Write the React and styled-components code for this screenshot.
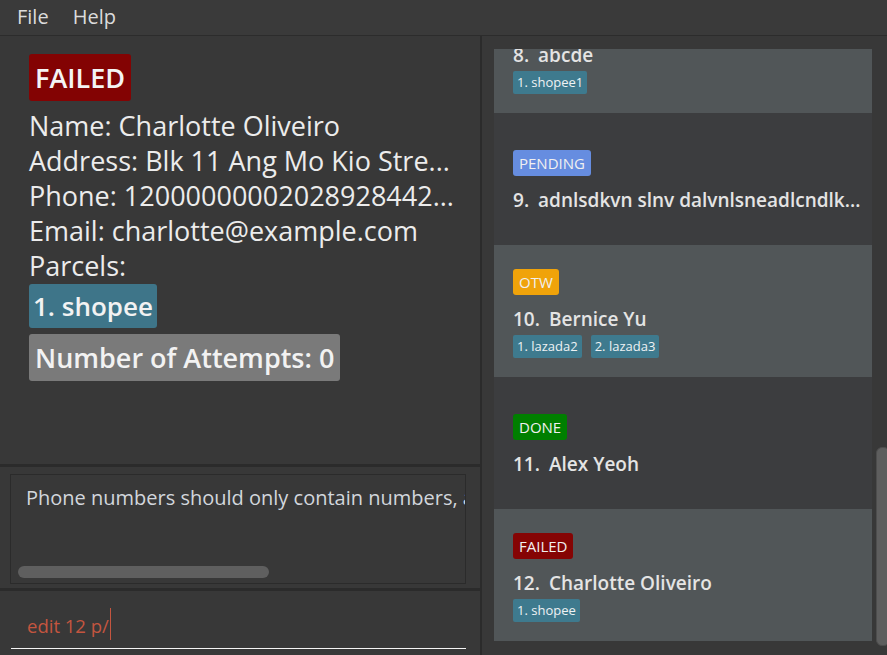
import React from "react";
import styled, { createGlobalStyle } from "styled-components";

const GlobalStyle = createGlobalStyle`
  html, body {
    margin: 0;
    padding: 0;
    background: #383838;
  }
  * {
    box-sizing: border-box;
  }
`;

const statusColors = {
  FAILED: "#850404",
  PENDING: "#668de0",
  OTW: "#f0a30a",
  DONE: "#007f00",
};

const deliveries = [
  { id: 8, name: "abcde", parcels: ["shopee1"] },
  { id: 9, name: "adnlsdkvn slnv dalvnlsneadlcndlk...", status: "PENDING", parcels: [] },
  { id: 10, name: "Bernice Yu", status: "OTW", parcels: ["lazada2", "lazada3"] },
  { id: 11, name: "Alex Yeoh", status: "DONE", parcels: [] },
  { id: 12, name: "Charlotte Oliveiro", status: "FAILED", parcels: ["shopee"] },
];

const App = () => {
  return (
    <>
      <GlobalStyle />
      <Window>
        <MenuBar>
          <MenuItem>File</MenuItem>
          <MenuItem>Help</MenuItem>
        </MenuBar>
        <Main>
          <LeftPane>
            <DetailPanel>
              <DetailBadge>FAILED</DetailBadge>
              <DetailLines>
                <DetailLine>Name: Charlotte Oliveiro</DetailLine>
                <DetailLine>Address: Blk 11 Ang Mo Kio Stre...</DetailLine>
                <DetailLine>Phone: 12000000002028928442...</DetailLine>
                <DetailLine>Email: charlotte@example.com</DetailLine>
                <DetailLine>Parcels:</DetailLine>
              </DetailLines>
              <DetailChip $bg="#3e7589">1. shopee</DetailChip>
              <DetailChip $bg="#7a7a7a" $tall>
                Number of Attempts: 0
              </DetailChip>
            </DetailPanel>
            <ResultPanel>
              <ResultBox>
                <ResultText>
                  Phone numbers should only contain numbers, and it should be at least 3 digits long
                </ResultText>
                <HScrollThumb />
              </ResultBox>
            </ResultPanel>
            <CommandPanel>
              <CommandField>
                <CommandText>edit 12 p/</CommandText>
                <Caret />
              </CommandField>
            </CommandPanel>
          </LeftPane>
          <RightPane>
            <ListViewport>
              <List>
                {deliveries.map((d) => (
                  <Card key={d.id} $dark={d.id % 2 === 1}>
                    <StatusBadge $color={statusColors[d.status || "FAILED"]}>
                      {d.status || "FAILED"}
                    </StatusBadge>
                    <NameRow>
                      <span>{d.id}.</span>
                      <span>{d.name}</span>
                    </NameRow>
                    {d.parcels.length > 0 && (
                      <TagRow>
                        {d.parcels.map((p, i) => (
                          <Tag key={p}>
                            {i + 1}. {p}
                          </Tag>
                        ))}
                      </TagRow>
                    )}
                  </Card>
                ))}
              </List>
            </ListViewport>
            <ScrollTrack>
              <ScrollThumb />
            </ScrollTrack>
          </RightPane>
        </Main>
      </Window>
    </>
  );
};

const Window = styled.div`
  width: 887px;
  height: 655px;
  display: flex;
  flex-direction: column;
  background: #383838;
  overflow: hidden;
  font-family: "Open Sans", "Noto Sans", sans-serif;
`;

const MenuBar = styled.div`
  height: 36px;
  flex-shrink: 0;
  display: flex;
  align-items: center;
  padding: 0 0 3px 17px;
  border-bottom: 1px solid #2c2c2c;
  background: #3a3a3a;
`;

const MenuItem = styled.span`
  font-size: 20px;
  color: #dcdcdc;
  margin-right: 24px;
`;

const Main = styled.div`
  flex: 1;
  display: flex;
  min-height: 0;
`;

const LeftPane = styled.div`
  width: 482px;
  flex-shrink: 0;
  display: flex;
  flex-direction: column;
  border-right: 2px solid #2b2b2b;
`;

const DetailPanel = styled.div`
  height: 428px;
  padding: 18px 20px 0 29px;
  display: flex;
  flex-direction: column;
  align-items: flex-start;
`;

const DetailBadge = styled.div`
  height: 47px;
  line-height: 47px;
  padding: 0 6px;
  background: #830303;
  color: #f4f4f4;
  font-size: 27px;
  font-weight: 600;
  border-radius: 3px;
`;

const DetailLines = styled.div`
  margin-top: 7px;
  display: flex;
  flex-direction: column;
`;

const DetailLine = styled.div`
  font-size: 27px;
  line-height: 35px;
  height: 35px;
  color: #ececec;
  white-space: nowrap;
`;

const DetailChip = styled.div`
  margin-top: ${(p) => (p.$tall ? "6px" : "1px")};
  height: ${(p) => (p.$tall ? "47px" : "44px")};
  line-height: ${(p) => (p.$tall ? "47px" : "44px")};
  padding: 0 ${(p) => (p.$tall ? "6px" : "4px")};
  background: ${(p) => p.$bg};
  color: #f2f2f2;
  font-size: ${(p) => (p.$tall ? "27px" : "26px")};
  font-weight: 600;
  border-radius: 3px;
  white-space: nowrap;
`;

const ResultPanel = styled.div`
  height: 124px;
  flex-shrink: 0;
  border-top: 3px solid #2b2b2b;
  padding: 7px 14px 0 10px;
`;

const ResultBox = styled.div`
  height: 110px;
  border: 1px solid #2b2b2b;
  display: flex;
  flex-direction: column;
  overflow: hidden;
`;

const ResultText = styled.div`
  padding: 10px 0 0 15px;
  font-size: 20px;
  line-height: 26px;
  color: #d2d6dc;
  white-space: nowrap;
`;

const HScrollThumb = styled.div`
  margin: auto 0 5px 7px;
  width: 251px;
  height: 12px;
  flex-shrink: 0;
  background: #5f5f5f;
  border-radius: 6px;
`;

const CommandPanel = styled.div`
  flex: 1;
  border-top: 3px solid #2b2b2b;
  padding: 12px 14px 0 11px;
`;

const CommandField = styled.div`
  height: 46px;
  padding: 10px 0 0 16px;
  border-bottom: 1px solid #f4f4f4;
  display: flex;
  align-items: flex-start;
`;

const CommandText = styled.span`
  font-size: 18.5px;
  line-height: 26px;
  color: #c4553f;
`;

const Caret = styled.span`
  width: 1px;
  height: 32px;
  margin: -5px 0 0 1px;
  background: #c4553f;
`;

const RightPane = styled.div`
  flex: 1;
  display: flex;
  min-width: 0;
`;

const ListViewport = styled.div`
  width: 378px;
  margin: 13px 0 14px 12px;
  overflow: hidden;
  flex-shrink: 0;
`;

const List = styled.div`
  margin-top: -68px;
  display: flex;
  flex-direction: column;
`;

const Card = styled.div`
  height: 132px;
  flex-shrink: 0;
  padding: 5px 19px 0;
  display: flex;
  flex-direction: column;
  justify-content: center;
  align-items: flex-start;
  background: ${(p) => (p.$dark ? "#3c3d3f" : "#515658")};
`;

const StatusBadge = styled.div`
  height: 26px;
  line-height: 26px;
  padding: 0 6px;
  font-size: 15px;
  color: #f0f0f0;
  background: ${(p) => p.$color};
  border-radius: 3px;
`;

const NameRow = styled.div`
  margin-top: 10px;
  height: 28px;
  display: flex;
  gap: 9px;
  font-size: 19px;
  line-height: 28px;
  font-weight: 600;
  color: #e4e4e4;
  white-space: nowrap;
`;

const TagRow = styled.div`
  margin-top: 2px;
  display: flex;
  gap: 9px;
`;

const Tag = styled.div`
  height: 23px;
  line-height: 23px;
  padding: 0 4px;
  font-size: 13px;
  color: #eef2f4;
  background: #3e7a8e;
  border-radius: 2px;
`;

const ScrollTrack = styled.div`
  width: 15px;
  margin-left: 2px;
  flex-shrink: 0;
  display: flex;
  flex-direction: column;
`;

const ScrollThumb = styled.div`
  margin: 411px 0 0 2px;
  width: 14px;
  height: 199px;
  background: #5e5e5e;
  border: 1px solid #4d4d4d;
  border-radius: 6px;
`;

export default App;
